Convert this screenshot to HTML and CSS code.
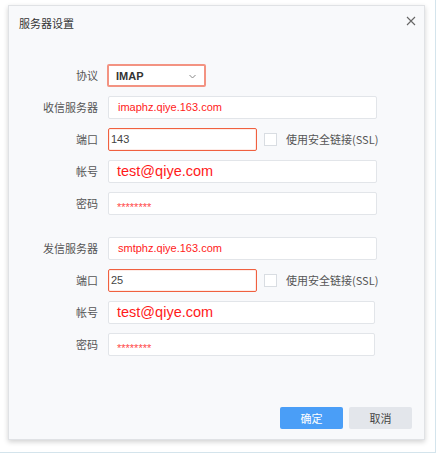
FILE: index.html
```html
<!DOCTYPE html>
<html lang="zh-CN">
<head>
<meta charset="utf-8">
<title>服务器设置</title>
<link rel="stylesheet" href="styles.css">
</head>
<body>
<div class="frame">
  <div class="dialog">
    <div class="header">
      <span class="title">服务器设置</span>
      <svg class="close" width="10" height="10" viewBox="0 0 10 10"><path d="M1 1 L9 9 M9 1 L1 9" stroke="#666" stroke-width="1.1" fill="none"/></svg>
    </div>
    <div class="form">
      <div class="section">
        <div class="row">
          <span class="label">协议</span>
          <div class="select"><span class="sel-text">IMAP</span>
            <svg class="chev" width="7" height="5" viewBox="0 0 7 5"><path d="M0.5 1 L3.5 4 L6.5 1" stroke="#888" stroke-width="1" fill="none"/></svg>
          </div>
        </div>
        <div class="row">
          <span class="label">收信服务器</span>
          <div class="input wide"><span class="val host">imaphz.qiye.163.com</span></div>
        </div>
        <div class="row">
          <span class="label">端口</span>
          <div class="input port"><span class="val num">143</span></div>
          <span class="check"></span>
          <span class="ssl">使用安全链接(SSL)</span>
        </div>
        <div class="row">
          <span class="label">帐号</span>
          <div class="input wide"><span class="val mail">test@qiye.com</span></div>
        </div>
        <div class="row">
          <span class="label">密码</span>
          <div class="input wide"><span class="val pwd">********</span></div>
        </div>
      </div>
      <div class="section">
        <div class="row">
          <span class="label">发信服务器</span>
          <div class="input wide"><span class="val host">smtphz.qiye.163.com</span></div>
        </div>
        <div class="row">
          <span class="label">端口</span>
          <div class="input port"><span class="val num">25</span></div>
          <span class="check"></span>
          <span class="ssl">使用安全链接(SSL)</span>
        </div>
        <div class="row">
          <span class="label">帐号</span>
          <div class="input wide2"><span class="val mail">test@qiye.com</span></div>
        </div>
        <div class="row">
          <span class="label">密码</span>
          <div class="input wide2"><span class="val pwd">********</span></div>
        </div>
      </div>
    </div>
    <div class="footer">
      <button class="btn primary">确定</button>
      <button class="btn">取消</button>
    </div>
  </div>
</div>
</body>
</html>
```

FILE: styles.css
```css
html, body {
  margin: 0;
  padding: 0;
  background: #ffffff;
}
body {
  font-family: "Noto Sans CJK SC", "Liberation Sans", sans-serif;
}
.frame {
  width: 436px;
  height: 453px;
  box-sizing: border-box;
  border-right: 1px solid #d4e4ec;
  border-bottom: 1px solid #d4e4ec;
  padding: 5px 0 0 8px;
}
.dialog {
  width: 417px;
  height: 435px;
  box-sizing: border-box;
  border: 1px solid #e0e2e5;
  background: #f8f9fb;
  box-shadow: 0 2px 5px rgba(0, 0, 0, 0.18);
  display: flex;
  flex-direction: column;
}
.header {
  height: 35px;
  display: flex;
  align-items: center;
  justify-content: space-between;
  padding: 0 8px 0 10px;
}
.title {
  font-size: 11px;
  color: #333;
  line-height: 1;
}
.close {
  margin-top: -6px;
}
.form {
  margin-top: 23px;
  display: flex;
  flex-direction: column;
}
.section + .section {
  margin-top: 22px;
}
.row {
  display: flex;
  align-items: center;
  height: 23px;
}
.row + .row {
  margin-top: 9px;
}
.label {
  width: 89px;
  text-align: right;
  font-size: 11px;
  color: #555;
  margin-right: 10px;
  line-height: 1;
}
.input, .select {
  height: 23px;
  box-sizing: border-box;
  background: #fff;
  border: 1px solid #e2e5e9;
  border-radius: 2px;
  display: flex;
  align-items: center;
}
.wide { width: 269px; }
.wide2 { width: 267px; }
.select {
  width: 99px;
  margin-left: -1px;
  border: 2px solid #f39382;
  padding: 0 8px 0 7px;
  justify-content: space-between;
}
.sel-text {
  font-family: "Liberation Sans", sans-serif;
  font-weight: bold;
  font-size: 11px;
  color: #333;
}
.chev { margin-top: 1px; }
.port {
  width: 149px;
  border: 1px solid #f0603f;
  box-shadow: inset 0 0 0 1px rgba(240, 96, 63, 0.12);
}
.val {
  font-family: "Liberation Sans", sans-serif;
  line-height: 1;
}
.host {
  color: #ff1a1a;
  font-size: 11px;
  padding-left: 9px;
}
.mail {
  color: #ff1a1a;
  font-size: 14.5px;
  padding-left: 8px;
}
.pwd {
  color: #ff4a4a;
  font-size: 11px;
  padding-left: 8px;
  margin-top: 7px;
}
.num {
  color: #444;
  font-size: 11px;
  padding-left: 2px;
}
.check {
  width: 11px;
  height: 11px;
  border: 1px solid #d9dde2;
  background: #fff;
  margin-left: 7px;
  margin-right: 9px;
}
.ssl {
  font-size: 11px;
  color: #555;
  line-height: 1;
}
.footer {
  margin-top: auto;
  display: flex;
  justify-content: flex-end;
  gap: 6px;
  padding: 0 12px 10px 0;
}
.btn {
  width: 63px;
  height: 22px;
  border: none;
  border-radius: 2px;
  background: #e3e6eb;
  color: #444;
  font-family: "Noto Sans CJK SC", sans-serif;
  font-size: 11px;
  padding: 0;
  line-height: 22px;
}
.btn.primary {
  background: #4a9ef7;
  color: #fff;
}
```
